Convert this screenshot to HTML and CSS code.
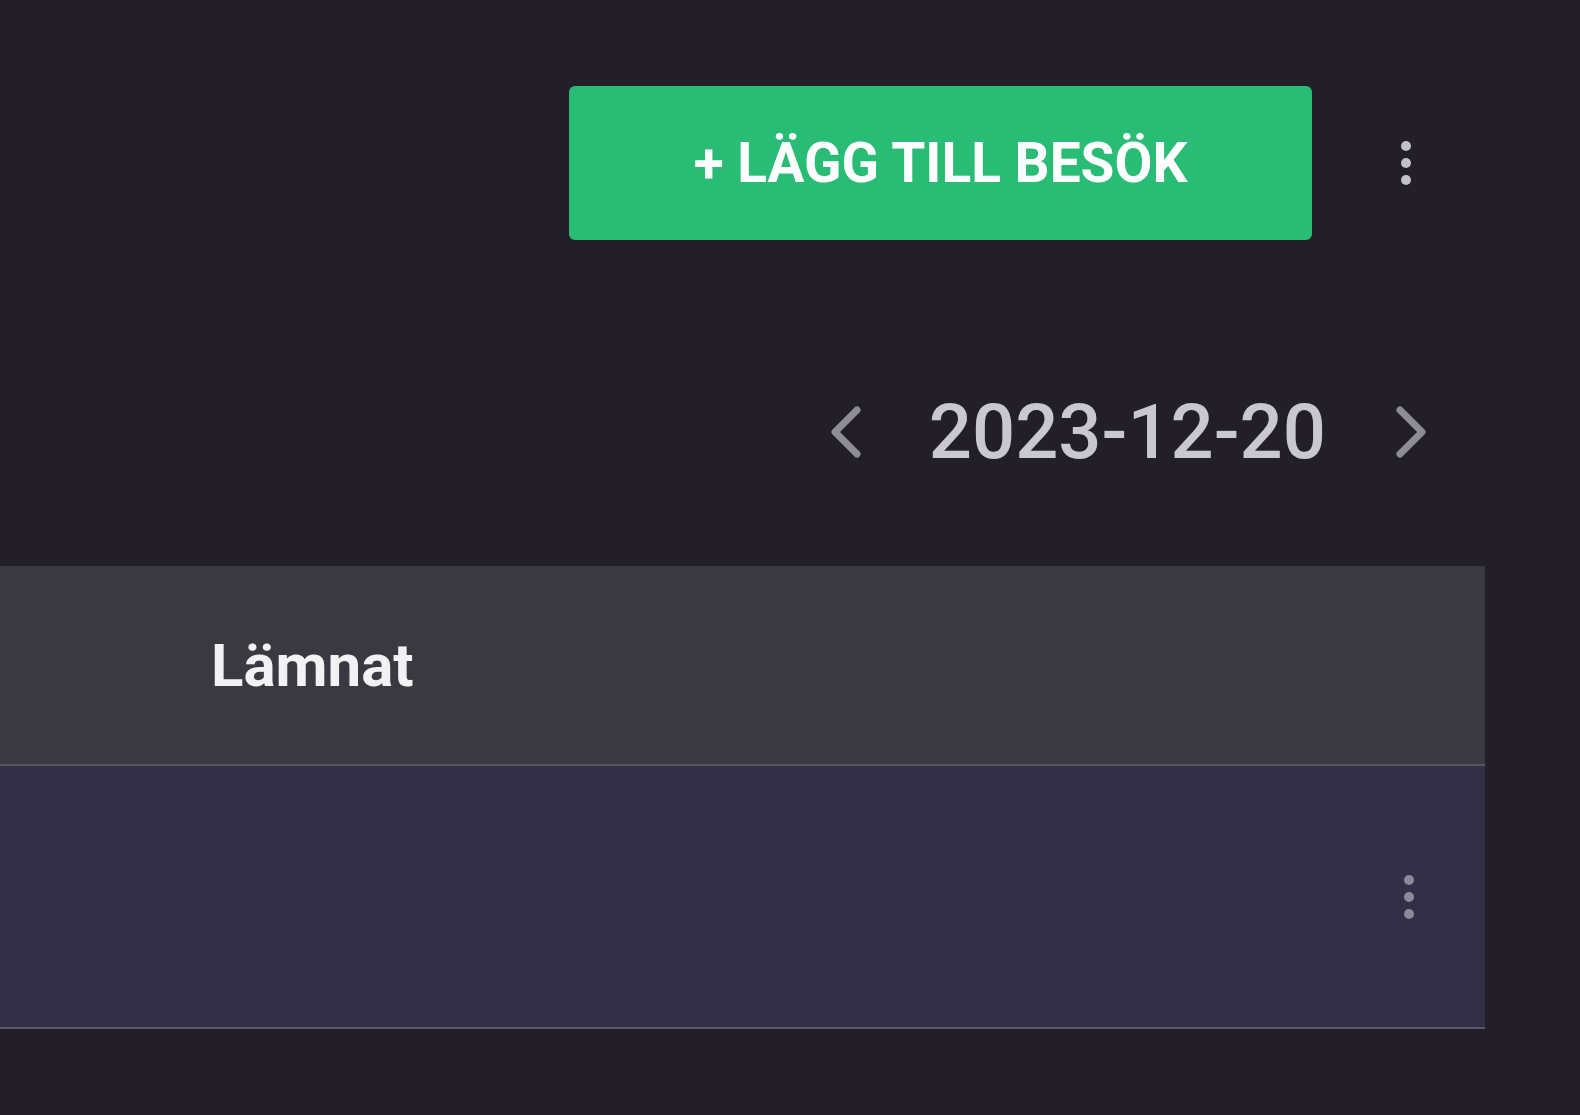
FILE: index.html
```html
<!DOCTYPE html>
<html lang="sv">

<head>
    <meta charset="UTF-8">
    <meta name="viewport" content="width=device-width, initial-scale=1.0">
    <title>Besök</title>
    <link rel="stylesheet" href="styles.css">
</head>

<body>
    <div class="toolbar">
        <button class="add-button">+ LÄGG TILL BESÖK</button>
        <button class="kebab" aria-label="Fler val">
            <span></span><span></span><span></span>
        </button>
    </div>

    <div class="date-nav">
        <button class="chevron" aria-label="Föregående dag">
            <svg viewBox="0 0 36 56" width="36" height="56">
                <polyline points="30,6 8,28 30,50" />
            </svg>
        </button>
        <div class="date">2023-12-20</div>
        <button class="chevron" aria-label="Nästa dag">
            <svg viewBox="0 0 36 56" width="36" height="56">
                <polyline points="6,6 28,28 6,50" />
            </svg>
        </button>
    </div>

    <div class="visits">
        <div class="visits-head">
            <div class="col-left">Lämnat</div>
        </div>
        <div class="visits-row">
            <button class="kebab kebab-dim" aria-label="Fler val">
                <span></span><span></span><span></span>
            </button>
        </div>
    </div>
</body>

</html>
```

FILE: styles.css
```css
body {
    margin: 0;
    background-color: #221f29;
    font-family: Roboto, "Liberation Sans", sans-serif;
    color: #e6e6ea;
    overflow: hidden;
}

button {
    font-family: inherit;
    border: none;
    background: none;
    padding: 0;
    cursor: pointer;
}

.toolbar {
    display: flex;
    justify-content: flex-end;
    align-items: center;
    gap: 74px;
    padding: 86px 154px 0 0;
}

.add-button {
    width: 743px;
    height: 154px;
    background-color: #29bc75;
    /* Green call to action */
    color: #ffffff;
    border-radius: 6px;
    font-size: 55px;
    font-weight: 700;
}

.kebab {
    width: 40px;
    display: flex;
    flex-direction: column;
    align-items: center;
    gap: 7px;
}

.kebab span {
    width: 10px;
    height: 10px;
    border-radius: 50%;
    background-color: #c2c1c8;
}

.kebab-dim span {
    background-color: #8c8a99;
}

.date-nav {
    display: flex;
    justify-content: flex-end;
    align-items: center;
    padding: 142px 150px 0 0;
    height: 100px;
}

.chevron {
    display: flex;
}

.chevron polyline {
    fill: none;
    stroke: #8e8c96;
    stroke-width: 7;
    stroke-linecap: round;
    stroke-linejoin: round;
}

.date {
    margin: 0 68px 0 66px;
    font-size: 76px;
    font-weight: 500;
    color: #c9c8cf;
}

.visits {
    margin: 84px 95px 0 0;
}

.visits-head {
    height: 198px;
    background-color: #3a3841;
    border-bottom: 2px solid #57555f;
    display: flex;
    align-items: center;
}

.col-left {
    margin-left: 211px;
    font-size: 60px;
    font-weight: 700;
    color: #f2f2f4;
}

.visits-row {
    height: 261px;
    background-color: #332f47;
    border-bottom: 2px solid #5b5966;
    display: flex;
    justify-content: flex-end;
    align-items: center;
    padding-right: 56px;
}
```
